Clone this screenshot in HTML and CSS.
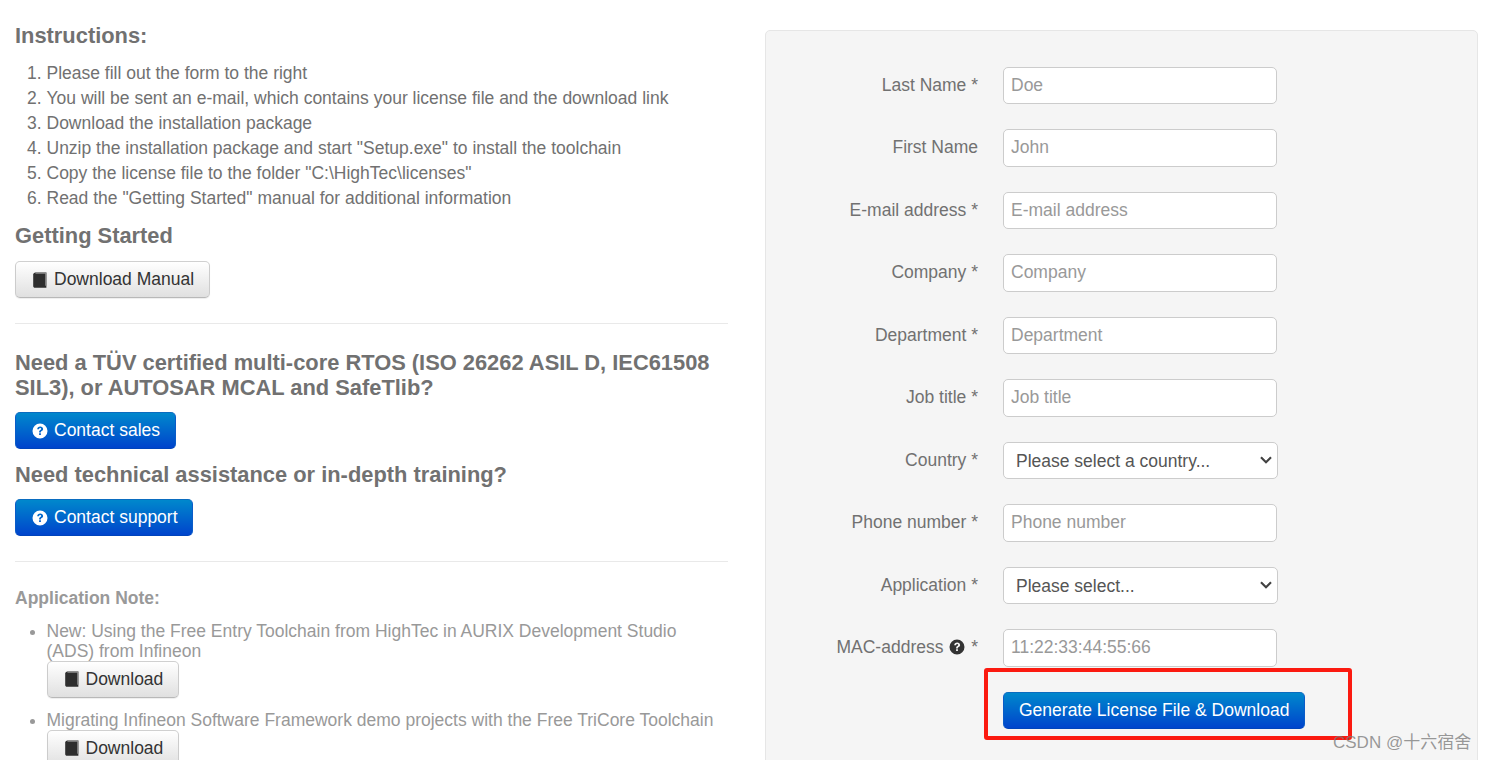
FILE: index.html
```html
<!DOCTYPE html>
<html lang="en">
<head>
<meta charset="utf-8">
<title>Free Entry Toolchain</title>
<link rel="stylesheet" href="styles.css">
</head>
<body>
<svg class="defs" width="0" height="0" aria-hidden="true">
  <symbol id="book" viewBox="0 0 16 16">
    <path d="M3.4 0.4H14.4V15.8H3C1.9 15.8 1.2 15 1.2 14V2.6C1.2 1.4 2.2 0.4 3.4 0.4Z" fill="#2e2e2e"/>
    <path d="M3.6 0.4H14.4V13.2L13.2 13.9V1.8H3.4Z" fill="#8f8f8f"/>
  </symbol>
  <symbol id="help" viewBox="0 0 16 16">
    <path fill="currentColor" fill-rule="evenodd" d="M8 0.5a7.5 7.5 0 1 0 0 15a7.5 7.5 0 0 0 0-15ZM5.2 6.2C5.3 4.5 6.5 3.5 8.2 3.5C9.9 3.5 11.1 4.5 11.1 5.9C11.1 7 10.5 7.6 9.7 8.1C9.1 8.5 8.9 8.7 8.9 9.4H7.1C7.1 8.1 7.5 7.6 8.3 7.1C8.9 6.7 9.2 6.5 9.2 6C9.2 5.4 8.8 5.1 8.2 5.1C7.5 5.1 7.1 5.5 7 6.2ZM7.1 10.2H8.9V12H7.1Z"/>
  </symbol>
</svg>
<main class="page">
  <section class="left">
    <h4 class="h-first">Instructions:</h4>
    <ol class="steps">
      <li>Please fill out the form to the right</li>
      <li>You will be sent an e-mail, which contains your license file and the download link</li>
      <li>Download the installation package</li>
      <li>Unzip the installation package and start "Setup.exe" to install the toolchain</li>
      <li>Copy the license file to the folder "C:\HighTec\licenses"</li>
      <li>Read the "Getting Started" manual for additional information</li>
    </ol>
    <h4 class="h-start">Getting Started</h4>
    <a class="btn btn-default"><svg class="ico"><use href="#book"/></svg>Download Manual</a>
    <hr class="rule-one">
    <h4 class="h-rtos">Need a TÜV certified multi-core RTOS (ISO 26262 ASIL D, IEC61508 SIL3), or AUTOSAR MCAL and SafeTlib?</h4>
    <a class="btn btn-primary"><svg class="ico"><use href="#help"/></svg>Contact sales</a>
    <h4 class="h-tech">Need technical assistance or in-depth training?</h4>
    <a class="btn btn-primary"><svg class="ico"><use href="#help"/></svg>Contact support</a>
    <hr class="rule-two">
    <h5>Application Note:</h5>
    <ul class="notes">
      <li>New: Using the Free Entry Toolchain from HighTec in AURIX Development Studio (ADS) from Infineon
        <a class="btn btn-default btn-note"><svg class="ico"><use href="#book"/></svg>Download</a></li>
      <li>Migrating Infineon Software Framework demo projects with the Free TriCore Toolchain
        <a class="btn btn-default btn-note"><svg class="ico"><use href="#book"/></svg>Download</a></li>
    </ul>
  </section>
  <section class="well">
    <form class="form">
      <label class="lbl">Last Name *</label><input class="ctl" placeholder="Doe">
      <label class="lbl">First Name</label><input class="ctl" placeholder="John">
      <label class="lbl">E-mail address *</label><input class="ctl" placeholder="E-mail address">
      <label class="lbl">Company *</label><input class="ctl" placeholder="Company">
      <label class="lbl">Department *</label><input class="ctl" placeholder="Department">
      <label class="lbl">Job title *</label><input class="ctl" placeholder="Job title">
      <label class="lbl">Country *</label><select class="ctl sel"><option>Please select a country...</option></select>
      <label class="lbl">Phone number *</label><input class="ctl" placeholder="Phone number">
      <label class="lbl">Application *</label><select class="ctl sel"><option>Please select...</option></select>
      <label class="lbl">MAC-address <svg class="ico-mac"><use href="#help"/></svg> *</label><input class="ctl" placeholder="11:22:33:44:55:66">
      <span></span><div class="submit-cell"><a class="btn btn-primary btn-submit">Generate License File &amp; Download</a></div>
    </form>
  </section>
</main>
<div class="annot"></div>
<div class="mark">CSDN @十六宿舍</div>
</body>
</html>
```
FILE: styles.css
```css
* { box-sizing: border-box; }
html, body { margin: 0; height: 760px; overflow: hidden; background: #fff; }
body {
  font-family: "Liberation Sans", Arial, sans-serif;
  font-size: 17.5px;
  line-height: 25px;
  color: #717171;
  position: relative;
}
.defs { position: absolute; }
.page {
  display: grid;
  grid-template-columns: 713px 713px;
  column-gap: 37px;
  padding: 0 0 0 15px;
}
.left { padding-top: 23px; }
h4 { margin: 0; font-size: 21.875px; line-height: 25px; font-weight: 700; color: #717171; }
.h-first { height: 25px; }
.steps { margin: 13px 0 0; padding: 0 0 0 31.5px; }
.steps li { height: 25px; }
.h-start { margin-top: 12px; margin-bottom: 13px; }
.btn {
  display: inline-flex;
  align-items: center;
  height: 37px;
  padding: 0 14.6px 0 16px;
  border: 1px solid #ccc;
  border-radius: 5px;
  font-size: 17.5px;
  white-space: nowrap;
}
.btn-default {
  color: #333;
  background: linear-gradient(#fff, #e0e0e0);
  border-color: #d0d0d0 #ccc #b8b8b8;
  box-shadow: inset 0 1px 0 rgba(255,255,255,.2), 0 1px 1px rgba(0,0,0,.07);
}
.btn-primary {
  color: #fff;
  background: linear-gradient(#0088cc, #0044cc);
  border-color: #0a6cc0 #0a5cc8 #0044bb;
}
.ico { width: 16px; height: 16px; margin-right: 6px; flex: none; }
.btn-default .ico { color: #333; }
.btn-primary .ico { color: #fff; }
hr { border: 0; border-top: 1px solid #e9e9e9; margin: 0; }
.rule-one { margin-top: 25px; }
.h-rtos { margin-top: 26px; margin-bottom: 12px; }
.h-tech { margin-top: 13px; margin-bottom: 12px; }
.rule-two { margin-top: 25px; }
h5 { margin: 24px 0 0; font-size: 17.5px; line-height: 25px; font-weight: 700; color: #999; }
.notes { margin: 10px 0 0; padding: 0 0 0 31.5px; color: #999; line-height: 20px; }
.notes li { padding-bottom: 12px; }
.notes li::marker { color: #999; }
.btn-note { display: flex; width: 132px; padding-bottom: 2px; }
.well {
  height: 800px;
  margin-top: 30px;
  background: #f5f5f5;
  border: 1px solid #e6e6e6;
  border-radius: 5px;
  padding-top: 35.6px;
}
.form {
  display: grid;
  grid-template-columns: 212px 275px;
  column-gap: 25px;
  row-gap: 25px;
  grid-auto-rows: 37.5px;
  align-items: center;
}
.lbl { text-align: right; color: #717171; white-space: nowrap; }
.ico-mac { width: 16px; height: 16px; color: #333; vertical-align: -2px; margin: 0 1px; }
.ctl {
  height: 37.5px;
  width: 274px;
  border: 1px solid #ccc;
  border-radius: 5px;
  padding: 0 7px;
  background: #fff;
  font: 17.5px "Liberation Sans", Arial, sans-serif;
  color: #555;
}
.ctl::placeholder { color: #999; opacity: 1; }
.sel {
  width: 275px;
  padding: 2px 7px 0 12px;
  appearance: none;
  background: #fff url("data:image/svg+xml,%3Csvg xmlns='http://www.w3.org/2000/svg' width='12' height='8' viewBox='0 0 12 8'%3E%3Cpath d='M1 1.2L6 6.2L11 1.2' fill='none' stroke='%23444' stroke-width='2.2'/%3E%3C/svg%3E") no-repeat right 5px center;
}
.submit-cell { align-self: start; margin-top: 0; }
.btn-submit { height: 37px; padding: 0 15px; }
.annot {
  position: absolute;
  left: 984px; top: 668px;
  width: 368px; height: 72px;
  border: 4px solid #fb1a10;
  border-radius: 3px;
}
.mark {
  position: absolute;
  left: 1333px; top: 730px;
  font: 17px "Liberation Sans", "Noto Sans CJK SC", sans-serif;
  line-height: 25px;
  color: rgba(120,120,120,.75);
  white-space: nowrap;
}
```
